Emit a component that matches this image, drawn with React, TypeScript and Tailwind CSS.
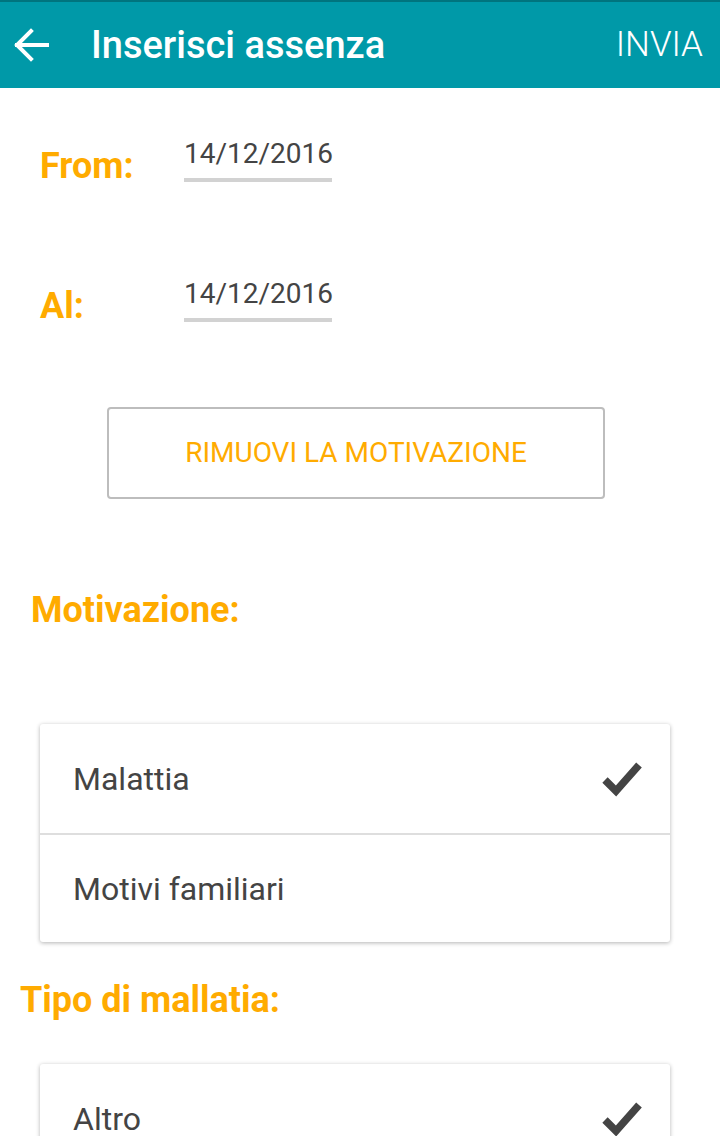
import React from 'react';

const font = { fontFamily: 'Roboto, "Liberation Sans", sans-serif' };

function CheckIcon() {
  return (
    <svg width="40" height="36" viewBox="0 0 40 36" className="shrink-0">
      <polyline
        points="3,19 14,30 37,4"
        fill="none"
        stroke="#444444"
        strokeWidth="7.5"
        strokeLinecap="butt"
        strokeLinejoin="miter"
      />
    </svg>
  );
}

function BackArrow() {
  return (
    <svg width="36" height="34" viewBox="0 0 36 34" className="shrink-0">
      <path d="M34 17H4M18 3L4 17L18 31" fill="none" stroke="#ffffff" strokeWidth="4" strokeLinecap="square" />
    </svg>
  );
}

function DateRow({ label, value, className }: { label: string; value: string; className?: string }) {
  return (
    <div className={`flex items-end pl-[40px] ${className ?? ''}`}>
      <span className="w-[144px] text-[36px] leading-[36px] font-bold text-[#ffab00] mb-[-2px]">{label}</span>
      <div className="w-[148px] pb-[6px] border-b-4 border-[#d2d2d2]">
        <span className="block text-[28px] leading-[36px] text-[#444444]">{value}</span>
      </div>
    </div>
  );
}

function OptionCard({ items, className }: { items: { label: string; checked?: boolean }[]; className?: string }) {
  return (
    <div className={`ml-[40px] w-[630px] bg-white rounded-[3px] shadow-[0_1px_4px_rgba(0,0,0,0.3)] ${className ?? ''}`}>
      {items.map((item, i) => (
        <div
          key={item.label}
          className={`h-[109px] flex items-center justify-between pl-[33px] pr-[28px] ${i > 0 ? 'border-t-2 border-[#dedede]' : ''}`}
        >
          <span className="text-[32px] text-[#444444]">{item.label}</span>
          {item.checked && <CheckIcon />}
        </div>
      ))}
    </div>
  );
}

export default function App() {
  return (
    <div className="w-[720px] h-[1136px] overflow-hidden bg-white" style={font}>
      <header className="h-[88px] bg-[#0099a8] border-t-2 border-[#00747e] flex items-center">
        <div className="pl-[13px] w-[91px]">
          <BackArrow />
        </div>
        <h1 className="flex-1 text-[38px] font-medium text-white">Inserisci assenza</h1>
        <span className="pr-[17px] text-[35px] font-light text-white">INVIA</span>
      </header>

      <DateRow label="From:" value="14/12/2016" className="mt-[48px]" />
      <DateRow label="Al:" value="14/12/2016" className="mt-[94px]" />

      <button className="mt-[85px] ml-[107px] w-[498px] h-[92px] border-2 border-[#bdbdbd] rounded-[4px] flex items-center justify-center">
        <span className="text-[28px] text-[#ffab00]">RIMUOVI LA MOTIVAZIONE</span>
      </button>

      <h2 className="mt-[91px] ml-[31px] text-[36px] leading-[40px] font-bold text-[#ffab00]">Motivazione:</h2>

      <OptionCard
        className="mt-[94px]"
        items={[{ label: 'Malattia', checked: true }, { label: 'Motivi familiari' }]}
      />

      <h2 className="mt-[38px] ml-[20px] text-[36px] leading-[40px] font-bold text-[#ffab00]">Tipo di mallatia:</h2>

      <OptionCard className="mt-[44px]" items={[{ label: 'Altro', checked: true }]} />
    </div>
  );
}
